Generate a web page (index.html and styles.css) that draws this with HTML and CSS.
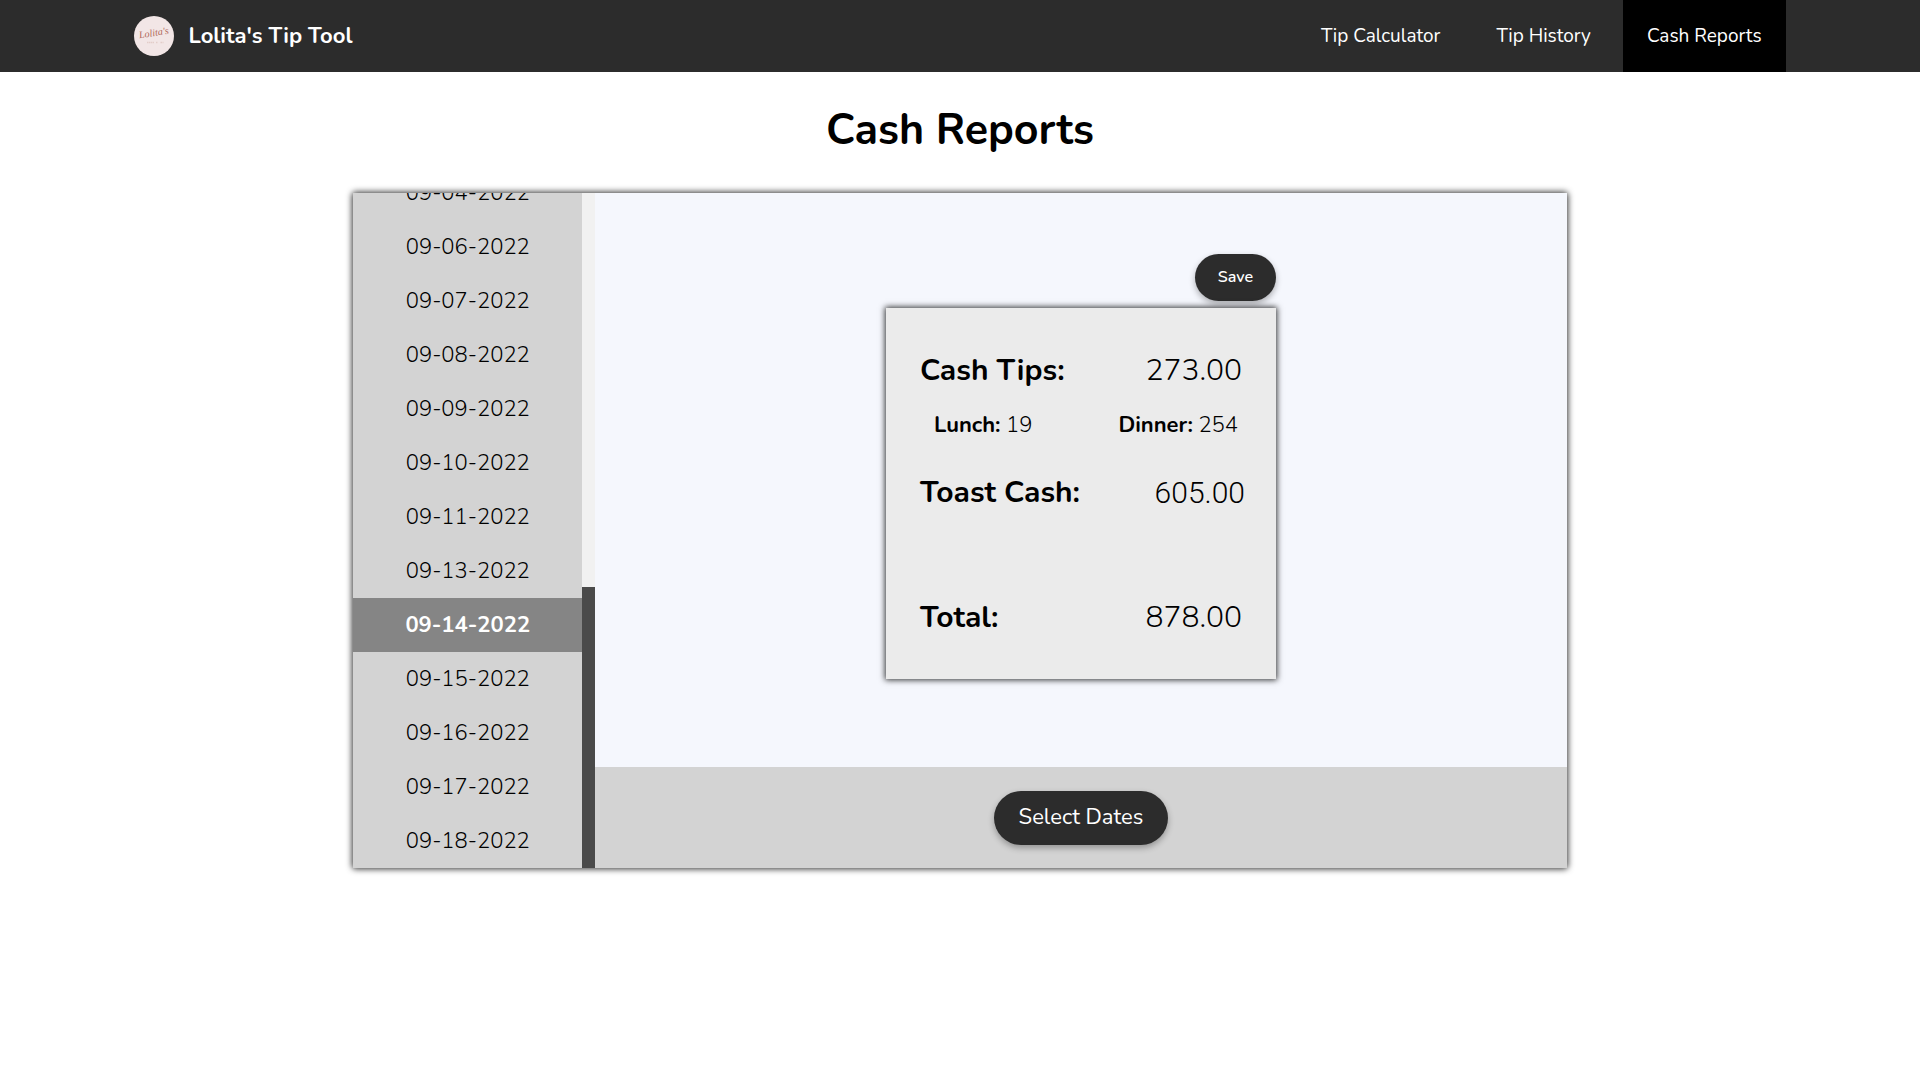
FILE: index.html
```html
<!DOCTYPE html>
<html lang="en">
<head>
<meta charset="utf-8">
<title>Lolita's Tip Tool</title>
<link rel="stylesheet" href="styles.css">
</head>
<body>
<header class="navbar">
  <a class="brand" href="#">
    <svg class="brand-logo" viewBox="0 0 40 40" aria-hidden="true">
      <circle cx="20" cy="20" r="20" fill="#f2e6e6"/>
      <text class="logo-script" x="20" y="20" text-anchor="middle" transform="rotate(-9 20 18)">Lolita's</text>
      <path d="M13 26.500h7M22 26.500h2M26.500 26.500h3" stroke="#e3cdc9" stroke-width="1.500" stroke-dasharray="1.500 .5"/>
    </svg>
    <span>Lolita's Tip Tool</span>
  </a>
  <nav class="nav-links">
    <a class="nav-link" href="#">Tip Calculator</a>
    <a class="nav-link" href="#">Tip History</a>
    <a class="nav-link active" href="#" aria-current="page">Cash Reports</a>
  </nav>
</header>
<main class="page">
  <h1 class="title">Cash Reports</h1>
  <section class="panel">
    <div class="dates">
      <ul class="date-list">
        <li><button class="date" type="button">09-04-2022</button></li>
        <li><button class="date" type="button">09-06-2022</button></li>
        <li><button class="date" type="button">09-07-2022</button></li>
        <li><button class="date" type="button">09-08-2022</button></li>
        <li><button class="date" type="button">09-09-2022</button></li>
        <li><button class="date" type="button">09-10-2022</button></li>
        <li><button class="date" type="button">09-11-2022</button></li>
        <li><button class="date" type="button">09-13-2022</button></li>
        <li><button class="date selected" type="button" aria-pressed="true">09-14-2022</button></li>
        <li><button class="date" type="button">09-15-2022</button></li>
        <li><button class="date" type="button">09-16-2022</button></li>
        <li><button class="date" type="button">09-17-2022</button></li>
        <li><button class="date" type="button">09-18-2022</button></li>
      </ul>
      <div class="scroll-track"><div class="scroll-thumb"></div></div>
    </div>
    <div class="report">
      <form class="report-body">
        <button class="btn btn-small" type="button">Save</button>
        <div class="card">
          <div class="row"><span class="label">Cash Tips:</span><span>273.00</span></div>
          <div class="row split">
            <span><span class="label">Lunch:</span> 19</span>
            <span><span class="label">Dinner:</span> 254</span>
          </div>
          <div class="row"><label class="label" for="toast-cash">Toast Cash:</label><input class="amount" id="toast-cash" type="text" value="605.00"></div>
          <div class="row total"><span class="label">Total:</span><span>878.00</span></div>
        </div>
      </form>
      <footer class="report-actions">
        <button class="btn" type="button">Select Dates</button>
      </footer>
    </div>
  </section>
</main>
</body>
</html>
```
FILE: styles.css
```css
* { box-sizing: border-box; }

body {
  margin: 0;
  background: #fff;
  color: #000;
  font-family: Nunito, Lato, "Open Sans", sans-serif;
}

button, input { font: inherit; color: inherit; }

.navbar {
  display: flex;
  justify-content: space-between;
  align-items: center;
  height: 72px;
  padding: 0 7%;
  background: #2c2c2c;
  color: #fff;
}

.brand {
  display: flex;
  align-items: center;
  gap: 14px;
  color: inherit;
  font-size: 22px;
  font-weight: 700;
  text-decoration: none;
}

.brand-logo { width: 40px; height: 40px; }

.logo-script {
  fill: #b0675a;
  font: italic 400 10px "Liberation Serif", serif;
}

.nav-links {
  display: flex;
  align-self: stretch;
  gap: 8px;
}

.nav-link {
  display: flex;
  align-items: center;
  padding: 0 24px;
  color: inherit;
  font-size: 19px;
  text-decoration: none;
}

.nav-link.active { background: #000; }

.page {
  display: flex;
  flex-direction: column;
  align-items: center;
  padding-bottom: 40px;
}

.title {
  margin: 28px 0 33px;
  font-size: 43px;
  line-height: 60px;
  font-weight: 700;
}

.panel {
  display: flex;
  width: 63.2%;
  height: 675px;
  box-shadow: 0 0 6px 1px rgba(0, 0, 0, .8);
  border-radius: 3px;
}

.dates {
  display: flex;
  flex: 0 0 242px;
  overflow: hidden;
  background: #d3d3d3;
}

.scroll-track {
  display: flex;
  flex-direction: column;
  justify-content: flex-end;
  width: 13px;
  background: #f1f1f1;
}

.scroll-thumb {
  height: 281px;
  background: #4a4a4a;
}

/* rows pile up from the bottom so the newest date is always in view */
.date-list {
  display: flex;
  flex: 1;
  flex-direction: column;
  justify-content: flex-end;
  margin: 0;
  padding: 0;
  list-style: none;
}

.date {
  display: block;
  width: 100%;
  height: 54px;
  padding: 0;
  border: 0;
  background: none;
  font-size: 22px;
  font-weight: 300;
}

.date.selected {
  background: #858585;
  color: #fff;
  font-weight: 700;
}

.report {
  display: flex;
  flex: 1;
  flex-direction: column;
}

.report-body {
  display: flex;
  flex: 1;
  flex-direction: column;
  align-items: flex-end;
  justify-content: center;
  gap: 7px;
  padding: 0 calc(50% - 195px) 28px;
  background: #f5f7fd;
}

.btn {
  height: 54px;
  padding: 0 25px 2px;
  border: 0;
  border-radius: 27px;
  background: #2c2c2c;
  box-shadow: 0 3px 6px rgba(0, 0, 0, .3);
  color: #fff;
  font-size: 22px;
}

.btn-small {
  height: 47px;
  padding: 0 23px;
  font-size: 16px;
  font-weight: 600;
}

.card {
  width: 100%;
  padding: 32px 34px 30px;
  background: #ebebeb;
  box-shadow: 0 0 6px 1px rgba(0, 0, 0, .8);
  font-size: 30px;
  font-weight: 300;
}

.row {
  display: flex;
  align-items: center;
  justify-content: space-between;
  height: 62px;
}

.row.split {
  height: 46px;
  padding: 0 4px 0 14px;
  font-size: 22px;
}

.row.split + .row { margin-top: 14px; }
.row.total { margin-top: 63px; }

.label { font-weight: 700; }

.amount {
  width: 100px;
  margin-right: -3px;
  padding: 0;
  border: 0;
  background: none;
  font-family: Roboto, sans-serif;
  text-align: right;
}

.report-actions {
  display: flex;
  align-items: center;
  justify-content: center;
  height: 101px;
  background: #d3d3d3;
}
```
